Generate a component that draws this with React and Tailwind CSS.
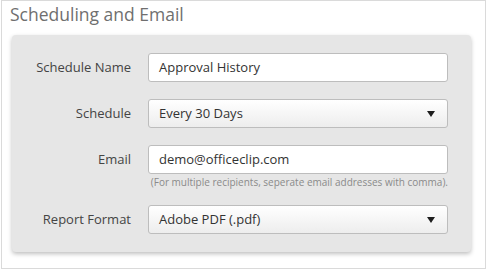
export default function App() {
  const font = { fontFamily: '"Open Sans", "Noto Sans", sans-serif' };
  return (
    <div className="w-[488px] h-[270px] bg-white" style={font}>
      <div className="ml-px w-[485px] h-[269px] border border-[#dadada] bg-white">
        <h2 className="pl-[8px] pt-[1px] h-[34px] text-[17.5px] leading-[24px] text-[#6f6f6f]">
          Scheduling and Email
        </h2>

        <div className="ml-[10px] w-[459px] rounded-[4px] bg-[#e6e6e6] shadow-[0_2px_4px_rgba(0,0,0,0.25)] pt-[18px] pb-[18px]">
          <div className="grid grid-cols-[119px_300px] gap-x-[17px] gap-y-[17px] items-start">
            <label className="h-[29px] flex items-center justify-end text-[13px] text-[#444]">Schedule Name</label>
            <div className="h-[29px] flex items-center pl-[10px] rounded-[3px] border border-[#bdbdbd] bg-white text-[13px] text-[#333]">
              Approval History
            </div>

            <label className="h-[29px] flex items-center justify-end text-[13px] text-[#444]">Schedule</label>
            <div className="h-[29px] flex items-center justify-between pl-[10px] pr-[12px] rounded-[3px] border border-[#bdbdbd] bg-gradient-to-b from-white to-[#ededed] text-[13px] text-[#333]">
              <span>Every 30 Days</span>
              <span className="w-0 h-0 border-l-[4px] border-r-[4px] border-t-[6px] border-l-transparent border-r-transparent border-t-[#1e1e1e]" />
            </div>

            <label className="h-[29px] flex items-center justify-end text-[13px] text-[#444]">Email</label>
            <div>
              <div className="h-[29px] flex items-center pl-[10px] rounded-[3px] border border-[#bdbdbd] bg-white text-[13px] text-[#333]">
                demo@officeclip.com
              </div>
              <p className="mt-[2px] text-[10px] leading-[12px] text-[#8a8a8a] text-right whitespace-nowrap">
                (For multiple recipients, seperate email addresses with comma).
              </p>
            </div>

            <label className="h-[29px] flex items-center justify-end text-[13px] text-[#444]">Report Format</label>
            <div className="h-[29px] flex items-center justify-between pl-[10px] pr-[12px] rounded-[3px] border border-[#bdbdbd] bg-gradient-to-b from-white to-[#ededed] text-[13px] text-[#333]">
              <span>Adobe PDF (.pdf)</span>
              <span className="w-0 h-0 border-l-[4px] border-r-[4px] border-t-[6px] border-l-transparent border-r-transparent border-t-[#1e1e1e]" />
            </div>
          </div>
        </div>
      </div>
    </div>
  );
}
